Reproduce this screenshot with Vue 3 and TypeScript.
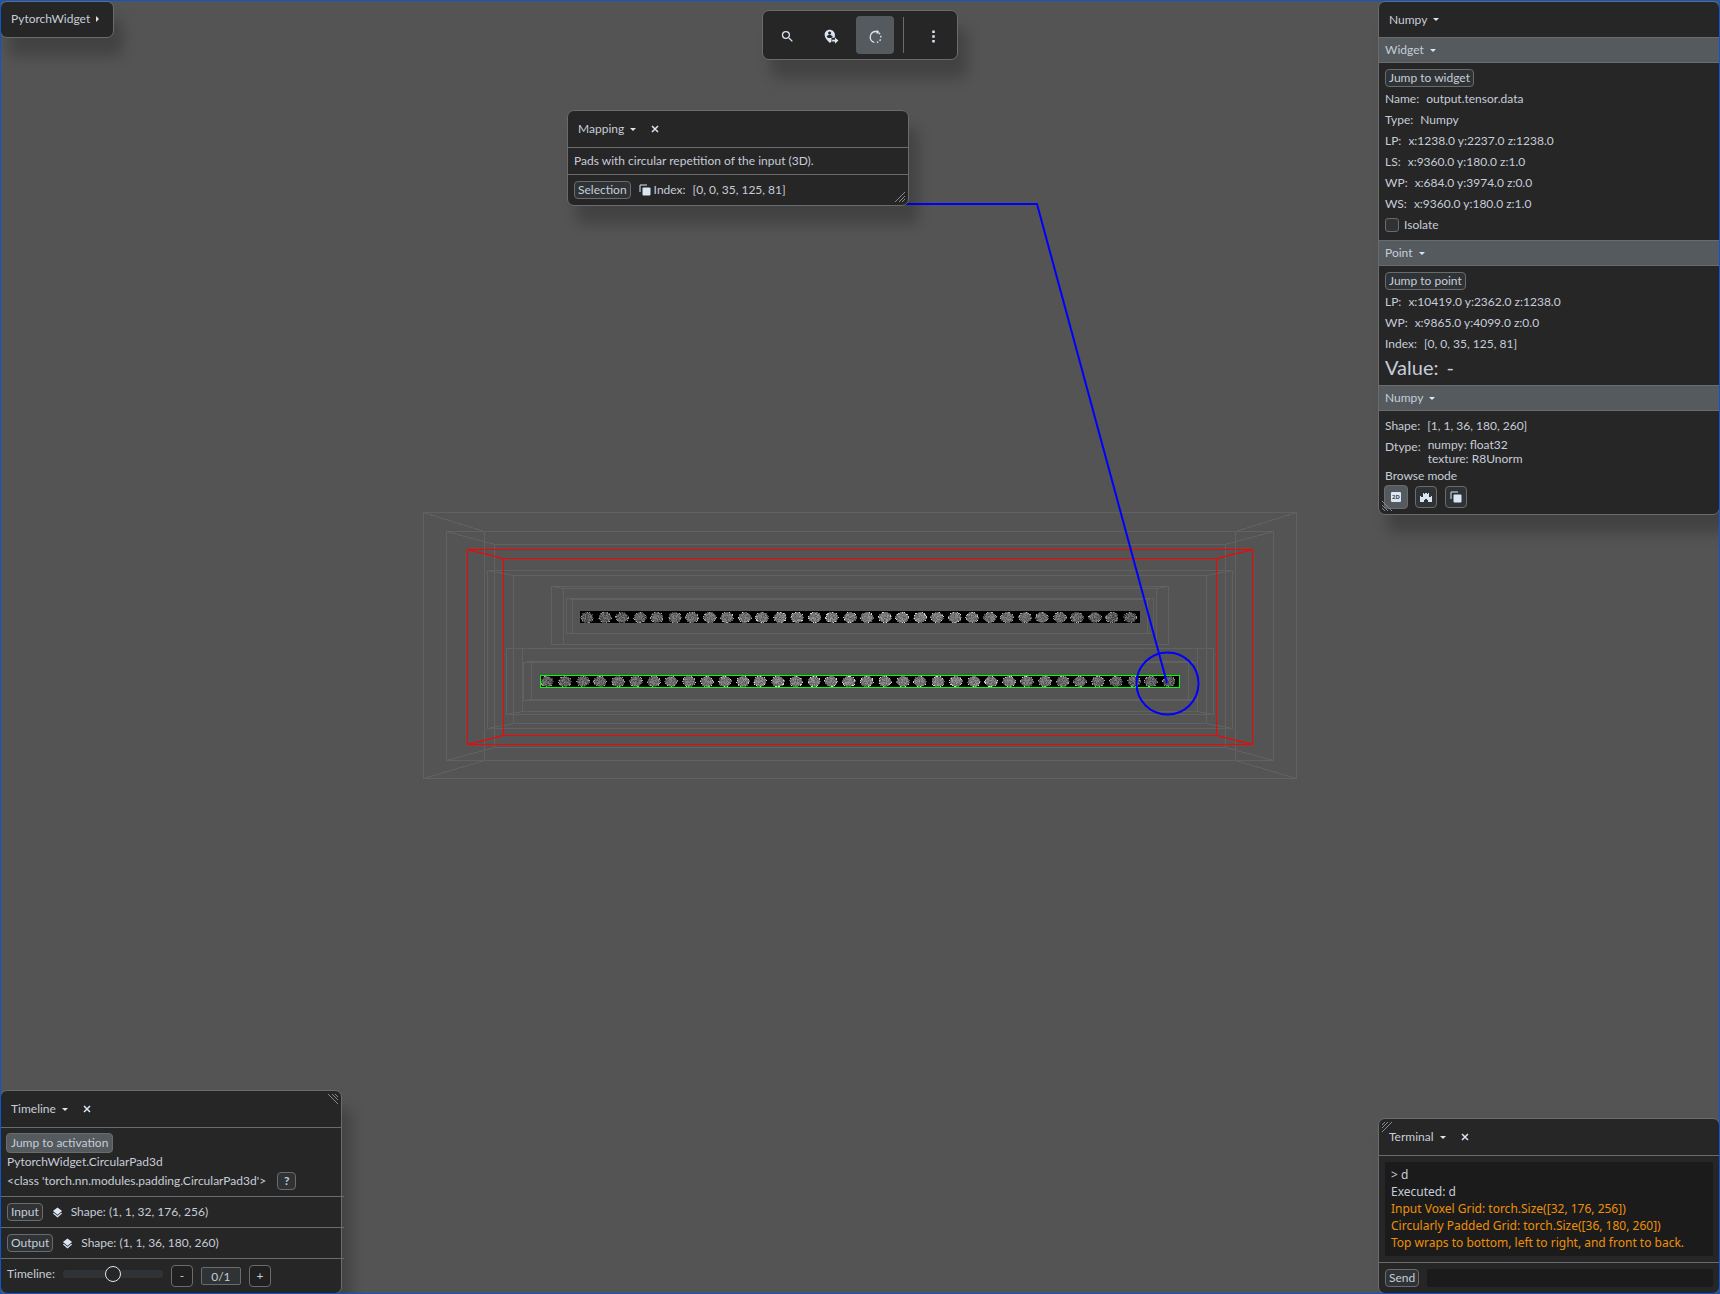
<script setup lang="ts">
import { ref } from 'vue'

interface Box { front: number[]; back: number[]; tone: string }
interface Row { label: string; value: string }
interface Slices { x: number; y: number; width: number; height: number; count: number; seed: number }

const boxes: Box[] = [
  { front: [423, 512, 1296, 778], back: [484, 531, 1235, 760], tone: 'dim' },
  { front: [446, 531, 1273, 760], back: [494, 544, 1225, 747], tone: 'dim' },
  { front: [487, 570, 1232, 728], back: [513, 575, 1206, 723], tone: 'dim' },
  { front: [551, 586, 1168, 644], back: [563, 588, 1156, 644], tone: 'dim' },
  { front: [566, 598, 1153, 633], back: [572, 599, 1147, 633], tone: 'dim' },
  { front: [506, 648, 1213, 714], back: [522, 648, 1197, 711], tone: 'dim' },
  { front: [523, 662, 1197, 700], back: [531, 661, 1188, 699], tone: 'dim' },
  { front: [467, 549, 1252, 744], back: [503, 558, 1216, 735], tone: 'hot' },
]

function boxPath(b: Box): string {
  const [a, c, d, e] = b.front.map((n) => n + 0.5)
  const [p, q, r, s] = b.back.map((n) => n + 0.5)
  return `M${a} ${c}H${d}V${e}H${a}ZM${p} ${q}H${r}V${s}H${p}Z` +
    `M${a} ${c}L${p} ${q}M${d} ${c}L${r} ${q}M${d} ${e}L${r} ${s}M${a} ${e}L${p} ${s}`
}

const strips: Slices[] = [
  { x: 580, y: 611, width: 560, height: 12, count: 32, seed: 11 },
  { x: 540, y: 675, width: 640, height: 13, count: 36, seed: 47 },
]

const greys = ['#242424', '#404040', '#585858', '#6c6c6c', '#7e7e7e', '#929292', '#acacac', '#d8d8d8']

function noise(x: number, y: number, seed: number): number {
  const v = Math.sin(x * 12.9898 + y * 78.233 + seed * 3.17) * 43758.5453
  return v - Math.floor(v)
}

function voxels(s: Slices): { fill: string; d: string }[] {
  const paths = greys.map(() => '')
  for (let i = 0; i < s.count; i++) {
    const cx = Math.round(s.x + 7 + (i * s.width) / s.count)
    const cy = s.y + Math.floor(s.height / 2)
    const edge = Math.min(i, s.count - 1 - i)
    const base = 2.2 + Math.min(edge, 12) * 0.13
    for (let dy = -5; dy <= 5; dy++) {
      for (let dx = -7; dx <= 6; dx++) {
        const r = (dx + 0.5) ** 2 / 42 + dy ** 2 / 28
        const n = noise(cx + dx, cy + dy, s.seed)
        if (r > 0.95 + n * 0.2) continue
        let level = base + (n - 0.5) * 2.8
        if (r > 0.75) level += n > 0.75 ? 2 : -1.2
        level = Math.max(0, Math.min(7, Math.round(level)))
        paths[level] += `M${cx + dx} ${cy + dy}h1v1h-1z`
      }
    }
  }
  return paths.map((d, i) => ({ fill: greys[i], d }))
}

const stripViews = strips.map((s) => ({ ...s, levels: voxels(s) }))

const widgetRows: Row[] = [
  { label: 'Name:', value: 'output.tensor.data' },
  { label: 'Type:', value: 'Numpy' },
  { label: 'LP:', value: 'x:1238.0 y:2237.0 z:1238.0' },
  { label: 'LS:', value: 'x:9360.0 y:180.0 z:1.0' },
  { label: 'WP:', value: 'x:684.0 y:3974.0 z:0.0' },
  { label: 'WS:', value: 'x:9360.0 y:180.0 z:1.0' },
]
const pointRows: Row[] = [
  { label: 'LP:', value: 'x:10419.0 y:2362.0 z:1238.0' },
  { label: 'WP:', value: 'x:9865.0 y:4099.0 z:0.0' },
  { label: 'Index:', value: '[0, 0, 35, 125, 81]' },
]
const tensors = [
  { name: 'Input', shape: 'Shape: (1, 1, 32, 176, 256)' },
  { name: 'Output', shape: 'Shape: (1, 1, 36, 180, 260)' },
]
const log = [
  { text: '> d', warn: false },
  { text: 'Executed: d', warn: false },
  { text: 'Input Voxel Grid: torch.Size([32, 176, 256])', warn: true },
  { text: 'Circularly Padded Grid: torch.Size([36, 180, 260])', warn: true },
  { text: 'Top wraps to bottom, left to right, and front to back.', warn: true },
]

const isolate = ref(false)
const step = ref(50)
const frame = ref('0/1')
const command = ref('')
</script>

<template>
  <main class="viewport">
    <svg class="scene" viewBox="0 0 1720 1294" preserveAspectRatio="xMidYMid slice" aria-hidden="true">
      <path v-for="(b, i) in boxes" :key="i" :d="boxPath(b)" :class="['wire', b.tone]" />
      <g v-for="s in stripViews" :key="s.seed" class="crisp">
        <rect :x="s.x" :y="s.y" :width="s.width" :height="s.height" fill="#000" />
        <path v-for="l in s.levels" :key="l.fill" :d="l.d" :fill="l.fill" />
      </g>
      <rect class="wire picked" x="540.5" y="675.5" width="639" height="12" />
      <path class="leader" d="M900 204H1037L1167 683" />
      <circle class="leader" cx="1167.5" cy="683.5" r="31" />
    </svg>

    <section class="panel root">
      <button class="title">PytorchWidget <i class="caret right"></i></button>
    </section>

    <nav class="panel toolbar" aria-label="Tools">
      <button class="tool" aria-label="Search">
        <svg viewBox="0 0 24 24"><path d="M15.5 14h-.79l-.28-.27A6.471 6.471 0 0 0 16 9.500 6.500 6.500 0 1 0 9.500 16c1.610 0 3.090-.59 4.230-1.570l.27.28v.79l5 4.990L20.490 19l-4.990-5zm-6 0C7.010 14 5 11.990 5 9.500S7.010 5 9.500 5 14 7.010 14 9.500 11.990 14 9.500 14z" /></svg>
      </button>
      <button class="tool" aria-label="Go to pin">
        <svg viewBox="2 0 22 24"><path fill-rule="evenodd" d="M10 1C5.500 1 2 4.500 2 9c0 5 4 9 8.500 13.500l2.500-2.600V14h5c.3-1.500.5-3 .5-5C18.500 4.500 14.500 1 10 1zm0 3a2.500 2.500 0 1 1 0 5 2.500 2.500 0 0 1 0-5zm0 10.500c-2 0-3.800-1-4.800-2.600.1-1.500 3.200-2.400 4.800-2.400s4.700.9 4.800 2.400c-1 1.600-2.800 2.600-4.800 2.600z" /><path d="M14 17h4.500v-3.500L24 18.500l-5.500 5V20H14z" /></svg>
      </button>
      <button class="tool on" aria-label="Rotate">
        <svg viewBox="0 0 24 24"><path d="M14 1v2.100A9.500 9.500 0 0 0 2.500 13c0 4.600 3.300 8.400 7.600 9.300v-2.100A7.500 7.500 0 0 1 4.600 13 7.400 7.400 0 0 1 14 5.400V8.500l4-3.800z" /><path d="M16.500 6.800l1.500-1.600 2 2.200-1.700 1.400zM19.300 11l2.100-.5.300 3h-2.200zM19.200 16l1.900 1-1.600 2.500-1.700-1.300zM16 19.500l1 1.900-2.700 1-.5-2.100z" /></svg>
      </button>
      <span class="rule"></span>
      <button class="tool" aria-label="More">
        <svg viewBox="0 0 24 24"><path d="M10 2.500h4v4h-4zM10 10h4v4h-4zM10 17.500h4v4h-4z" /></svg>
      </button>
    </nav>

    <section class="panel mapping">
      <header class="head">
        <button class="title">Mapping <i class="caret"></i></button>
        <button class="close" aria-label="Close"><svg viewBox="0 0 8 8"><path d="M1 1l6 6M7 1L1 7" /></svg></button>
      </header>
      <p class="note">Pads with circular repetition of the input (3D).</p>
      <div class="pick">
        <button class="btn">Selection</button>
        <svg class="icon copy" viewBox="0 0 12 12"><path d="M1 8V1h7" /><rect x="3.500" y="3.500" width="8" height="8" rx="1" /></svg>
        <span class="pair"><span>Index:</span><span>[0, 0, 35, 125, 81]</span></span>
      </div>
      <svg class="grip br" viewBox="0 0 10 10"><path d="M0 10L10 0M4 10L10 4M7 10L10 7" /></svg>
    </section>

    <aside class="panel inspector">
      <header class="head"><button class="title">Numpy <i class="caret"></i></button></header>
      <button class="bar">Widget <i class="caret"></i></button>
      <div class="rows">
        <div class="row"><button class="btn">Jump to widget</button></div>
        <div v-for="r in widgetRows" :key="r.label" class="row pair"><span>{{ r.label }}</span><span>{{ r.value }}</span></div>
        <label class="row check"><input v-model="isolate" type="checkbox" />Isolate</label>
      </div>
      <button class="bar">Point <i class="caret"></i></button>
      <div class="rows">
        <div class="row"><button class="btn">Jump to point</button></div>
        <div v-for="r in pointRows" :key="r.label" class="row pair"><span>{{ r.label }}</span><span>{{ r.value }}</span></div>
        <div class="big"><span>Value:</span><span>-</span></div>
      </div>
      <button class="bar">Numpy <i class="caret"></i></button>
      <div class="rows">
        <div class="row pair"><span>Shape:</span><span>[1, 1, 36, 180, 260]</span></div>
        <div class="pair dtype"><span>Dtype:</span><span class="stack"><span>numpy: float32</span><span>texture: R8Unorm</span></span></div>
        <div class="mode">Browse mode</div>
        <div class="modes">
          <button class="sq on" aria-label="2D"><svg class="icon" viewBox="0 0 12 12"><rect x="1" y="1" width="10" height="10" rx="1" /><text x="6" y="8">2D</text></svg></button>
          <button class="sq" aria-label="Fort"><svg class="icon" viewBox="0 0 12 12"><path d="M0 11V5h1v1h2V2h1v1h1V2h2v1h1V2h1v4h2V5h1v6H8V9H7V8H5v1H4v2z" /></svg></button>
          <button class="sq" aria-label="Layers"><svg class="icon copy" viewBox="0 0 12 12"><path d="M1 8V1h7" /><rect x="3.500" y="3.500" width="8" height="8" rx="1" /></svg></button>
        </div>
      </div>
      <svg class="grip bl" viewBox="0 0 10 10"><path d="M0 10L10 0M4 10L10 4M7 10L10 7" /></svg>
    </aside>

    <section class="panel timeline">
      <header class="head">
        <button class="title">Timeline <i class="caret"></i></button>
        <button class="close" aria-label="Close"><svg viewBox="0 0 8 8"><path d="M1 1l6 6M7 1L1 7" /></svg></button>
      </header>
      <div class="module">
        <button class="btn on">Jump to activation</button>
        <div class="path">PytorchWidget.CircularPad3d</div>
        <div class="cls"><span>&lt;class 'torch.nn.modules.padding.CircularPad3d'&gt;</span><button class="btn help">?</button></div>
      </div>
      <div v-for="t in tensors" :key="t.name" class="tensor">
        <button class="btn">{{ t.name }}</button>
        <svg class="icon" viewBox="0 0 12 12"><path d="M6 1l5 4-5 4-5-4zM6 10L2 6.800 1 7.700l5 4.200 5-4.200-1-.9z" /></svg>
        <span>{{ t.shape }}</span>
      </div>
      <div class="scrub">
        <div class="slider">
          <label for="scrub">Timeline:</label>
          <input id="scrub" v-model="step" type="range" min="0" max="100" />
        </div>
        <button class="sq plain">-</button>
        <input v-model="frame" class="count" type="text" aria-label="Frame" />
        <button class="sq plain">+</button>
      </div>
      <svg class="grip tr" viewBox="0 0 10 10"><path d="M0 10L10 0M4 10L10 4M7 10L10 7" /></svg>
    </section>

    <section class="panel terminal">
      <header class="head">
        <button class="title">Terminal <i class="caret"></i></button>
        <button class="close" aria-label="Close"><svg viewBox="0 0 8 8"><path d="M1 1l6 6M7 1L1 7" /></svg></button>
      </header>
      <div class="log"><div v-for="l in log" :key="l.text" :class="{ warn: l.warn }">{{ l.text }}</div></div>
      <form class="send" @submit.prevent>
        <button class="btn">Send</button>
        <input v-model="command" type="text" aria-label="Command" />
      </form>
      <svg class="grip tl" viewBox="0 0 10 10"><path d="M0 10L10 0M4 10L10 4M7 10L10 7" /></svg>
    </section>
  </main>
</template>

<style>
body {
  margin: 0;
  background: #545454;
}
</style>

<style scoped>
.viewport {
  position: relative;
  height: 100vh;
  overflow: hidden;
  background: #545454;
  color: #c6cdd9;
  font: 12px/16px Lato, sans-serif;
}
.viewport::after {
  content: "";
  position: absolute;
  inset: 0;
  border: 1px solid #0b58cc;
  pointer-events: none;
}
*, *::before, *::after { box-sizing: border-box; }
button, input { font: inherit; color: inherit; margin: 0; }
button { border: 0; padding: 0; background: none; white-space: nowrap; }
.scene { display: block; width: 100%; height: 100%; }
.wire { fill: none; stroke-width: 1; shape-rendering: crispEdges; }
.dim { stroke: #616161; }
.hot { stroke: #f00; }
.picked { stroke: #0f0; }
.crisp { shape-rendering: crispEdges; }
.leader { fill: none; stroke: #00f; stroke-width: 2; }

.panel {
  position: absolute;
  background: #262626;
  border: 1px solid #696b6c;
  border-radius: 7px;
  box-shadow: 9px 18px 14px rgba(0, 0, 0, 0.21);
}
.head {
  display: flex;
  align-items: center;
  gap: 15px;
  height: 36px;
  padding: 0 10px;
}
.title { display: flex; align-items: center; gap: 6px; }
.caret {
  border: 3px solid transparent;
  border-top-color: #dbe6f5;
  border-bottom-width: 0;
}
.caret.right {
  border: 3px solid transparent;
  border-left-color: #dbe6f5;
  border-right-width: 0;
}
.close { display: flex; }
.close svg { width: 8px; height: 8px; stroke: #dbe6f5; stroke-width: 1.500; fill: none; }
.icon { width: 12px; height: 12px; fill: #dbe6f5; flex: none; }
.icon.copy path { fill: none; stroke: #dbe6f5; }
.icon text { font: bold 6px "Noto Sans", sans-serif; text-anchor: middle; fill: #40464a; }
.grip { position: absolute; width: 10px; height: 10px; stroke: #85898d; stroke-width: 1; fill: none; }
.grip.br { right: 3px; bottom: 3px; }
.grip.bl { left: 3px; bottom: 3px; transform: scaleX(-1); }
.grip.tr { right: 3px; top: 3px; transform: scaleY(-1); }
.grip.tl { left: 3px; top: 3px; transform: rotate(180deg); }

.btn {
  height: 18px;
  padding: 0 3px;
  line-height: 16px;
  background: #303335;
  border: 1px solid #696b6c;
  border-radius: 4px;
}
.btn.on, .sq.on { background: #545a5d; }
.pair { display: flex; gap: 7px; }

.root { left: 0; top: 1px; padding: 0 14px 0 10px; }
.root .title { height: 34px; }
.root { padding-bottom: 1px; }

.toolbar {
  left: 50%;
  top: 10px;
  transform: translateX(-50%);
  display: flex;
  align-items: center;
  gap: 6px;
  padding: 5px;
}
.tool { width: 38px; height: 38px; padding-top: 2px; border-radius: 4px; display: grid; place-items: center; }
.tool.on { background: #545a5d; }
.tool svg { width: 15px; height: 15px; fill: #dbe6f5; }
.rule { width: 1px; height: 36px; margin: 0 4px 0 3px; background: #696b6c; }

.mapping { left: 567px; top: 110px; width: 342px; }
.note { margin: 0; padding: 5px 6px; border: solid #696b6c; border-width: 1px 0; }
.pick { display: flex; align-items: center; height: 30px; padding: 0 6px; }
.pick .icon { margin: 0 3px 0 8px; }

.inspector { right: 0; top: 1px; width: 342px; }
.bar {
  display: flex;
  align-items: center;
  gap: 6px;
  width: 100%;
  height: 26px;
  padding: 0 6px;
  background: #545a5d;
  border: solid #696b6c;
  border-width: 1px 0;
}
.inspector .head { height: 35px; }
.rows { padding: 4px 6px 5px; }
.row { display: flex; align-items: center; height: 21px; }
.row.check { gap: 5px; }
.check input {
  appearance: none;
  width: 14px;
  height: 14px;
  border: 1px solid #696b6c;
  border-radius: 3px;
  background: #303335;
}
.big { display: flex; gap: 8px; font-size: 20px; line-height: 26px; }
.dtype { align-items: flex-start; line-height: 21px; }
.stack { display: flex; flex-direction: column; padding-top: 2px; line-height: 14px; }
.mode { line-height: 19px; }
.modes { display: flex; align-items: center; gap: 8px; height: 24px; }
.sq {
  display: grid;
  place-items: center;
  width: 22px;
  height: 22px;
  background: #303335;
  border: 1px solid #696b6c;
  border-radius: 4px;
}
.sq.on { width: 24px; height: 24px; margin: 0 -1px; }
.sq.plain { background: #202020; }

.timeline { left: 0; bottom: 0; width: 342px; }
.module { border-top: 1px solid #696b6c; padding: 5px; line-height: 18px; }
.module > .btn { display: block; height: 20px; padding: 0 4px; }
.cls { display: flex; align-items: center; gap: 11px; height: 20px; }
.help { width: 19px; font-weight: bold; }
.path, .cls { padding-left: 1px; }
.tensor {
  display: flex;
  align-items: center;
  height: 31px;
  margin-right: -3px;
  padding: 0 6px;
  border-top: 1px solid #696b6c;
}
.tensor .icon { width: 11px; margin: 0 8px 0 9px; }
.scrub {
  display: flex;
  align-items: center;
  gap: 8px;
  height: 35px;
  margin-right: -3px;
  padding: 0 6px;
  border-top: 1px solid #696b6c;
}
.slider { display: flex; align-items: center; gap: 8px; padding-bottom: 4px; }
.slider label { min-width: 46px; }
.slider input { appearance: none; width: 100px; height: 16px; background: none; }
.slider input::-webkit-slider-runnable-track { height: 8px; border-radius: 3px; background: #303335; }
.slider input::-webkit-slider-thumb {
  appearance: none;
  width: 16px;
  height: 16px;
  margin-top: -4px;
  border: 1px solid #dbe6f5;
  border-radius: 50%;
  background: #262626;
}
.count {
  width: 40px;
  height: 18px;
  padding: 0;
  text-align: center;
  background: #303335;
  border: 1px solid #696b6c;
  border-radius: 2px;
}

.terminal { right: 0; bottom: 0; width: 342px; }
.terminal .head { height: 37px; border-bottom: 1px solid #696b6c; }
.log {
  margin: 6px;
  padding: 4px 6px 5px;
  background: #1b1b1b;
  font-family: "Noto Sans", sans-serif;
  line-height: 17px;
}
.warn { color: #ec900a; }
.send { display: flex; gap: 8px; padding: 6px; border-top: 1px solid #696b6c; }
.send input { flex: 1; min-width: 0; height: 18px; border: 0; border-radius: 2px; background: #1b1b1b; }
</style>
